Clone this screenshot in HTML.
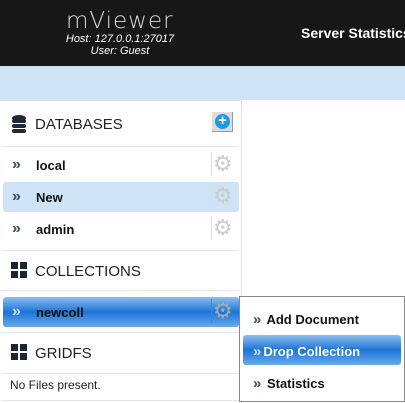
<!DOCTYPE html>
<html><head><style>
body{margin:0;width:405px;height:402px;overflow:hidden;background:#fff;font-family:"Liberation Sans",Arial,sans-serif;position:relative}
.hdr{position:absolute;left:0;top:0;width:405px;height:66px;background:#171717}
.logo{position:absolute;left:66px;top:8px;color:#ddd;font-size:23px;letter-spacing:1px;font-family:"DejaVu Sans",sans-serif;font-weight:200}
.host{position:absolute;left:60px;top:33px;width:120px;text-align:center;color:#fff;font-style:italic;font-size:11px;line-height:12px}
.srv{position:absolute;left:301px;top:25px;color:#fff;font-weight:bold;font-size:14px;white-space:nowrap}
.band{position:absolute;left:0;top:66px;width:405px;height:34px;background:#cfe3f6}
.side{position:absolute;left:0;top:100px;width:241px;height:302px;border-right:1px solid #e6e6e6;border-top:1px solid #e3e3e3}
.sec{position:absolute;left:12px;font-size:15px;color:#222}
.hl{position:absolute;left:1px;width:238px;height:1px;background:#e3e6e8}
.row{position:absolute;left:3px;width:236px;height:30px;border-radius:3px;font-weight:bold;font-size:13px;color:#111}
.row .ar{position:absolute;left:9px;top:6px;color:#3b4a5c;font-size:16px;font-weight:bold}
.row .t{position:absolute;left:33px;top:8px}
.row .sep{position:absolute;left:208px;top:2px;width:1px;height:24px;background:#ddd}
.row .g{position:absolute;left:210px;top:1px;font-size:22px;color:#ccc;font-weight:normal}
.grid{position:absolute;left:11px;width:16px;height:16px}
.grid i{position:absolute;width:7px;height:7px;background:#1b2634}
.menu{position:absolute;left:239px;top:296px;width:164px;height:104px;border:1px solid #888;background:#fff}
.mi{position:absolute;font-weight:bold;font-size:13px;color:#111}
.mi b{color:#3b4a5c;font-size:15px;margin-right:2px}
</style></head><body>
<div class="hdr">
 <div class="logo">mViewer</div>
 <div class="host">Host: 127.0.0.1:27017<br>User: Guest</div>
 <div class="srv">Server Statistics</div>
</div>
<div class="band"></div>
<div class="side"></div>
<svg style="position:absolute;left:12px;top:115px" width="14" height="18" viewBox="0 0 14 18"><g fill="#1f2a36"><ellipse cx="7" cy="3" rx="7" ry="3"/><rect x="0" y="4" width="14" height="4" rx="2"/><rect x="0" y="9" width="14" height="4" rx="2"/><rect x="0" y="14" width="14" height="4" rx="2"/></g></svg>
<div class="sec" style="left:35px;top:116px">DATABASES</div>
<div style="position:absolute;left:212px;top:112px;width:20px;height:19px;background:#ddd;border-right:1px solid #999;border-bottom:1px solid #999"><div style="position:absolute;left:3px;top:2px;width:15px;height:15px;border-radius:50%;background:#1a9be6;color:#fff;font-weight:bold;font-size:15px;line-height:14px;text-align:center">+</div></div>
<div class="hl" style="top:146px"></div>
<div class="row" style="top:150px"><span class="ar">»</span><span class="t">local</span><span class="sep"></span><span class="g">⚙</span></div>
<div class="row" style="top:182px;background:#cfe3f6"><span class="ar">»</span><span class="t">New</span><span class="sep"></span><span class="g">⚙</span></div>
<div class="row" style="top:214px"><span class="ar">»</span><span class="t">admin</span><span class="sep"></span><span class="g">⚙</span></div>
<div class="hl" style="top:250px"></div>
<div class="grid" style="top:262px"><i style="left:0;top:0"></i><i style="left:9px;top:0"></i><i style="left:0;top:9px"></i><i style="left:9px;top:9px"></i></div>
<div class="sec" style="left:35px;top:263px">COLLECTIONS</div>
<div class="hl" style="top:290px"></div>
<div class="row" style="top:297px;background:linear-gradient(#8fc0ef,#1b74d6 50%,#6aabea)"><span class="ar" style="color:#cfe0f5">»</span><span class="t">newcoll</span><span class="sep" style="background:#4a80c0"></span><span class="g" style="color:#aaa">⚙</span></div>
<div class="hl" style="top:332px"></div>
<div class="grid" style="top:344px"><i style="left:0;top:0"></i><i style="left:9px;top:0"></i><i style="left:0;top:9px"></i><i style="left:9px;top:9px"></i></div>
<div class="sec" style="left:35px;top:345px">GRIDFS</div>
<div class="hl" style="top:373px"></div>
<div style="position:absolute;left:10px;top:378px;font-size:12px;color:#222">No Files present.</div>
<div class="hl" style="top:400px"></div>
<div class="menu">
 <div class="mi" style="left:13px;top:14px"><b>»</b> Add Document</div>
 <div style="position:absolute;left:3px;top:38px;width:158px;height:30px;border-radius:3px;background:linear-gradient(#8fc0ef,#1b74d6 50%,#6aabea)"></div>
 <div class="mi" style="left:13px;top:46px;color:#fff"><b style="color:#cfe0f5">»</b>Drop Collection</div>
 <div class="mi" style="left:13px;top:78px"><b>»</b> Statistics</div>
</div>
</body></html>
